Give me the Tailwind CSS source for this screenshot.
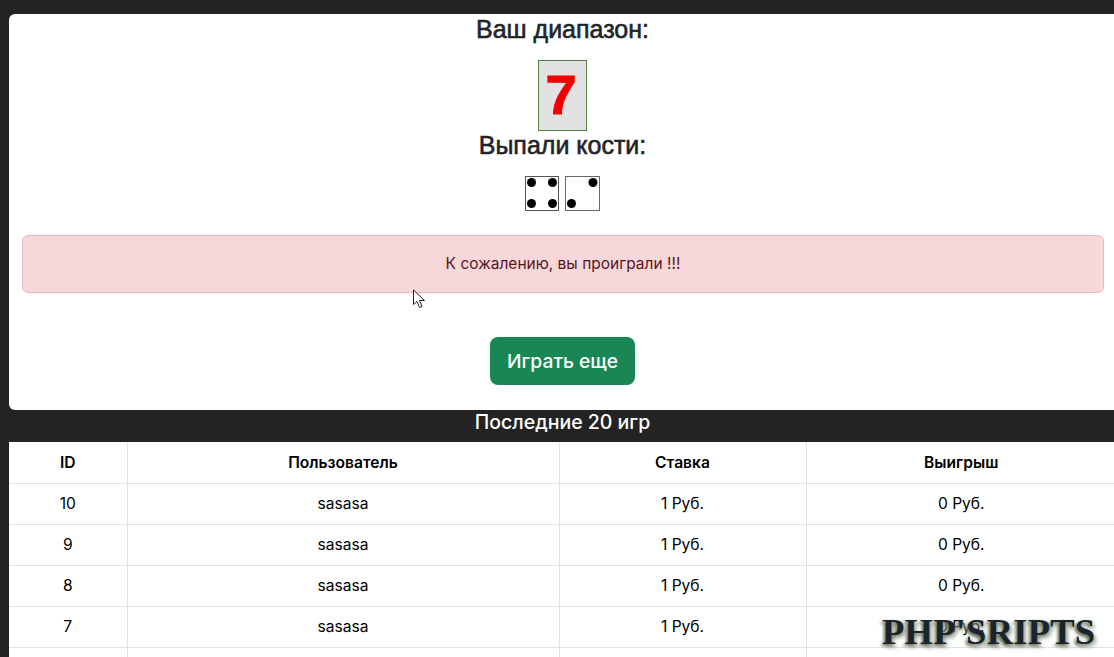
<!DOCTYPE html>
<html lang="ru">
<head>
    <meta charset="UTF-8">
    <meta name="viewport" content="width=device-width, initial-scale=1.0">
    <title>Результат игры</title>
    <script src="https://cdn.jsdelivr.net/npm/@tailwindcss/browser@4"></script>
</head>
<body class="bg-[#232323] h-[657px] overflow-hidden relative font-['Inter',sans-serif] text-[#212529]">
    <div class="w-[1107px] ml-[9px] pt-[14px]">
        <div class="bg-white rounded-l-[6px] h-[396px] flex flex-col items-center">
            <h2 class="font-['Liberation_Sans',sans-serif] text-[25px] leading-[30px] [-webkit-text-stroke:0.6px_#212529]">Ваш диапазон:</h2>
            <div class="mt-[16px] w-[49px] h-[71px] pr-[3px] pb-[2px] bg-[#e2e2e2] border border-[#55803f] flex items-center justify-center font-['Liberation_Sans',sans-serif] font-bold text-[56px] leading-none text-[#f00000] [-webkit-text-stroke:1px_#f00000]">7</div>
            <h2 class="mt-[-1px] font-['Liberation_Sans',sans-serif] text-[25px] leading-[30px] [-webkit-text-stroke:0.6px_#212529]">Выпали кости:</h2>
            <div class="mt-[16px] flex gap-[6px]">
                <svg width="34" height="35" viewBox="0 0 34 35">
                    <rect x="0.5" y="0.5" width="33" height="34" fill="#fff" stroke="#555"/>
                    <circle cx="6.5" cy="6.5" r="4.5"/>
                    <circle cx="27.5" cy="6.5" r="4.5"/>
                    <circle cx="6.5" cy="27.5" r="4.5"/>
                    <circle cx="27.5" cy="27.5" r="4.5"/>
                </svg>
                <svg width="35" height="35" viewBox="0 0 35 35">
                    <rect x="0.5" y="0.5" width="34" height="34" fill="#fff" stroke="#666"/>
                    <circle cx="28" cy="6.5" r="4.5"/>
                    <circle cx="6.5" cy="27.5" r="4.5"/>
                </svg>
            </div>
            <div class="mt-[24px] self-stretch ml-[13px] mr-[12px] h-[58px] bg-[#f8d7da] border border-[#e8b9be] rounded-[6px] flex items-center justify-center text-[15.5px] text-[#58151c]">К сожалению, вы проиграли !!!</div>
            <button class="mt-[44px] w-[145px] h-[48px] bg-[#198754] rounded-[8px] text-white text-[19.3px] font-medium">Играть еще</button>
        </div>
        <h3 class="h-[32px] pb-[6px] flex items-center justify-center text-white text-[19.5px] font-medium">Последние 20 игр</h3>
        <table class="w-full table-fixed bg-white border-collapse text-[15.6px] text-black text-center">
            <colgroup>
                <col class="w-[118px]">
                <col class="w-[432px]">
                <col class="w-[247px]">
                <col>
            </colgroup>
            <thead>
                <tr class="h-[41px]">
                    <th class="font-semibold border-r border-b border-[#dee2e6]">ID</th>
                    <th class="font-semibold border-r border-b border-[#dee2e6]">Пользователь</th>
                    <th class="font-semibold border-r border-b border-[#dee2e6]">Ставка</th>
                    <th class="font-semibold border-b border-[#dee2e6]">Выигрыш</th>
                </tr>
            </thead>
            <tbody>
                <tr class="h-[41px]">
                    <td class="border-r border-b border-[#dee2e6]">10</td>
                    <td class="border-r border-b border-[#dee2e6]">sasasa</td>
                    <td class="border-r border-b border-[#dee2e6]">1 Руб.</td>
                    <td class="border-b border-[#dee2e6]">0 Руб.</td>
                </tr>
                <tr class="h-[41px]">
                    <td class="border-r border-b border-[#dee2e6]">9</td>
                    <td class="border-r border-b border-[#dee2e6]">sasasa</td>
                    <td class="border-r border-b border-[#dee2e6]">1 Руб.</td>
                    <td class="border-b border-[#dee2e6]">0 Руб.</td>
                </tr>
                <tr class="h-[41px]">
                    <td class="border-r border-b border-[#dee2e6]">8</td>
                    <td class="border-r border-b border-[#dee2e6]">sasasa</td>
                    <td class="border-r border-b border-[#dee2e6]">1 Руб.</td>
                    <td class="border-b border-[#dee2e6]">0 Руб.</td>
                </tr>
                <tr class="h-[41px]">
                    <td class="border-r border-b border-[#dee2e6]">7</td>
                    <td class="border-r border-b border-[#dee2e6]">sasasa</td>
                    <td class="border-r border-b border-[#dee2e6]">1 Руб.</td>
                    <td class="border-b border-[#dee2e6]">0 Руб.</td>
                </tr>
                <tr class="h-[41px]">
                    <td class="border-r border-[#dee2e6]"></td>
                    <td class="border-r border-[#dee2e6]"></td>
                    <td class="border-r border-[#dee2e6]"></td>
                    <td></td>
                </tr>
            </tbody>
        </table>
    </div>

    <!-- mouse cursor -->
    <svg class="absolute left-[412px] top-[289px]" width="15" height="20" viewBox="0 0 15 20">
        <path d="M1.5 1 L1.5 15.5 L5 12.5 L7.5 18.5 L10 17.5 L7.5 11.5 L12.5 11.5 Z" fill="#fff" stroke="#222" stroke-width="1"/>
    </svg>

    <!-- watermark -->
    <div class="absolute left-[882px] top-[612px] font-['Liberation_Serif',serif] font-bold text-[36.6px] leading-[40px] tracking-[0.2px] text-[#1b242b] [text-shadow:-2px_2px_3px_#6f7a5e,2px_3px_4px_#8d9480]">PHP'SRIPTS</div>
</body>
</html>
